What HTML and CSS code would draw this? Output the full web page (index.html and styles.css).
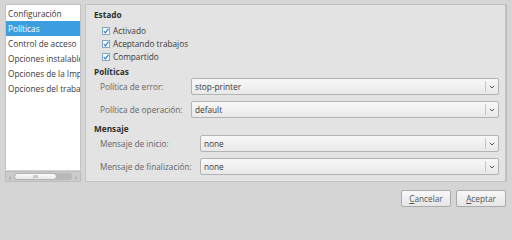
FILE: index.html
```html
<!DOCTYPE html>
<html lang="es">
<head>
<meta charset="utf-8">
<title>Propiedades de la impresora</title>
<link rel="stylesheet" href="styles.css">
</head>
<body>
<div class="window">
  <div class="main">
    <div class="sidebar">
      <ul class="list">
        <li>Configuración</li>
        <li class="selected">Políticas</li>
        <li>Control de acceso</li>
        <li>Opciones instalables</li>
        <li>Opciones de la Impresora</li>
        <li>Opciones del trabajo</li>
      </ul>
      <div class="hscroll">
        <span class="arrow">‹</span>
        <div class="track">
          <div class="handle"><span class="grip"></span></div>
        </div>
        <span class="arrow">›</span>
      </div>
    </div>
    <div class="panel">
      <div class="header">Estado</div>
      <div class="checks">
        <label class="check"><svg class="box" viewBox="0 0 8 8" width="8" height="8"><rect x="0.5" y="0.5" width="7" height="7" fill="#fdfdfd" stroke="#7fa7cc"/><path d="M1.8 4.1 L3.4 5.8 L6.4 1.9" fill="none" stroke="#2c7bd0" stroke-width="1.2"/></svg>Activado</label>
        <label class="check"><svg class="box" viewBox="0 0 8 8" width="8" height="8"><rect x="0.5" y="0.5" width="7" height="7" fill="#fdfdfd" stroke="#7fa7cc"/><path d="M1.8 4.1 L3.4 5.8 L6.4 1.9" fill="none" stroke="#2c7bd0" stroke-width="1.2"/></svg>Aceptando trabajos</label>
        <label class="check"><svg class="box" viewBox="0 0 8 8" width="8" height="8"><rect x="0.5" y="0.5" width="7" height="7" fill="#fdfdfd" stroke="#7fa7cc"/><path d="M1.8 4.1 L3.4 5.8 L6.4 1.9" fill="none" stroke="#2c7bd0" stroke-width="1.2"/></svg>Compartido</label>
      </div>
      <div class="header h2">Políticas</div>
      <div class="form form1">
        <span class="label">Política de error:</span>
        <div class="combo"><span class="value">stop-printer</span><span class="drop"><svg viewBox="0 0 6 4" width="6" height="4"><path d="M0.8 0.8 L3 3 L5.2 0.8" fill="none" stroke="#555" stroke-width="1"/></svg></span></div>
        <span class="label">Política de operación:</span>
        <div class="combo"><span class="value">default</span><span class="drop"><svg viewBox="0 0 6 4" width="6" height="4"><path d="M0.8 0.8 L3 3 L5.2 0.8" fill="none" stroke="#555" stroke-width="1"/></svg></span></div>
      </div>
      <div class="header h3">Mensaje</div>
      <div class="form form2">
        <span class="label">Mensaje de inicio:</span>
        <div class="combo"><span class="value">none</span><span class="drop"><svg viewBox="0 0 6 4" width="6" height="4"><path d="M0.8 0.8 L3 3 L5.2 0.8" fill="none" stroke="#555" stroke-width="1"/></svg></span></div>
        <span class="label">Mensaje de finalización:</span>
        <div class="combo"><span class="value">none</span><span class="drop"><svg viewBox="0 0 6 4" width="6" height="4"><path d="M0.8 0.8 L3 3 L5.2 0.8" fill="none" stroke="#555" stroke-width="1"/></svg></span></div>
      </div>
    </div>
  </div>
  <div class="footer">
    <button class="btn"><u>C</u>ancelar</button>
    <button class="btn"><u>A</u>ceptar</button>
  </div>
</div>
</body>
</html>
```

FILE: styles.css
```css
html, body {
  margin: 0;
  padding: 0;
}
body {
  background: #d5d5d5;
  font-family: "Open Sans", "Noto Sans", sans-serif;
  font-size: 8.25px;
  color: #3a3a3a;
}
.window {
  width: 512px;
  height: 211px;
  box-sizing: border-box;
  display: flex;
  flex-direction: column;
}
.main {
  display: flex;
  padding: 4px 5px 0 5px;
  gap: 4px;
  height: 178px;
}
.sidebar {
  width: 76px;
  display: flex;
  flex-direction: column;
}
.list {
  list-style: none;
  margin: 0;
  padding: 1px 0 0 0;
  height: 166px;
  box-sizing: border-box;
  background: #ffffff;
  border: 1px solid #c2c2c2;
  border-bottom: none;
  overflow: hidden;
}
.list li {
  height: 15px;
  line-height: 15px;
  padding-left: 2px;
  white-space: nowrap;
  overflow: hidden;
  color: #3a3a3a;
}
.list li.selected {
  background: #3c9ede;
  color: #fff;
}
.hscroll {
  height: 11px;
  display: flex;
  align-items: center;
  background: #cbcbcb;
  border: 1px solid #bdbdbd;
  box-sizing: border-box;
  margin-top: 1px;
}
.arrow {
  width: 8px;
  text-align: center;
  color: #888;
  font-size: 8px;
  line-height: 9px;
}
.track {
  flex: 1;
  height: 7px;
  background: #b9b9b9;
  border-radius: 3px;
  display: flex;
}
.handle {
  width: 43px;
  height: 7px;
  box-sizing: border-box;
  background: linear-gradient(#fbfbfb, #e9e9e9);
  border: 1px solid #b2b2b2;
  border-radius: 4px;
  display: flex;
  align-items: center;
  justify-content: center;
}
.grip {
  width: 5px;
  height: 3px;
  background-image: radial-gradient(circle, #bbb 0.6px, transparent 0.7px);
  background-size: 2px 1.5px;
}
.panel {
  flex: 1;
  height: 178px;
  box-sizing: border-box;
  background: #e3e3e3;
  border: 1px solid #c4c4c4;
  border-right: 2px solid #bfbfbf;
  padding: 3px 6px 0 8px;
}
.header {
  font-weight: bold;
  color: #2e2e2e;
  line-height: 14px;
  height: 14px;
}
.h2 {
  margin-top: 3px;
  line-height: 12px;
  height: 12px;
}
.h3 {
  margin-top: 5px;
  line-height: 12px;
  height: 12px;
}
.checks {
  margin-top: 2px;
  padding-left: 8px;
}
.check {
  display: flex;
  align-items: center;
  height: 13px;
  gap: 3px;
  color: #3a3a3a;
}
.box {
  display: block;
  flex: none;
}
.form {
  display: grid;
  row-gap: 6px;
  column-gap: 0;
  padding-left: 6px;
  align-items: center;
}
.form1 {
  grid-template-columns: 91px 1fr;
}
.form2 {
  grid-template-columns: 100px 1fr;
}
.label {
  color: #666666;
  white-space: nowrap;
}
.combo {
  height: 17px;
  box-sizing: border-box;
  border: 1px solid #b3b3b3;
  border-radius: 2px;
  background: linear-gradient(#f8f8f8, #e8e8e8);
  display: flex;
  align-items: center;
}
.value {
  flex: 1;
  padding-left: 3px;
  color: #3a3a3a;
}
.drop {
  width: 12px;
  height: 11px;
  border-left: 1px solid #c6c6c6;
  display: flex;
  align-items: center;
  justify-content: center;
}
.drop svg {
  display: block;
}
.footer {
  display: flex;
  justify-content: flex-end;
  gap: 5px;
  padding: 8px 6px 0 0;
}
.btn {
  width: 50px;
  height: 17px;
  box-sizing: border-box;
  border: 1px solid #ababab;
  border-radius: 2px;
  background: linear-gradient(#f8f8f8, #e6e6e6);
  font-family: "Open Sans", "Noto Sans", sans-serif;
  font-size: 8.25px;
  color: #555;
  padding: 0;
}
.btn u {
  text-decoration: underline;
}
```
